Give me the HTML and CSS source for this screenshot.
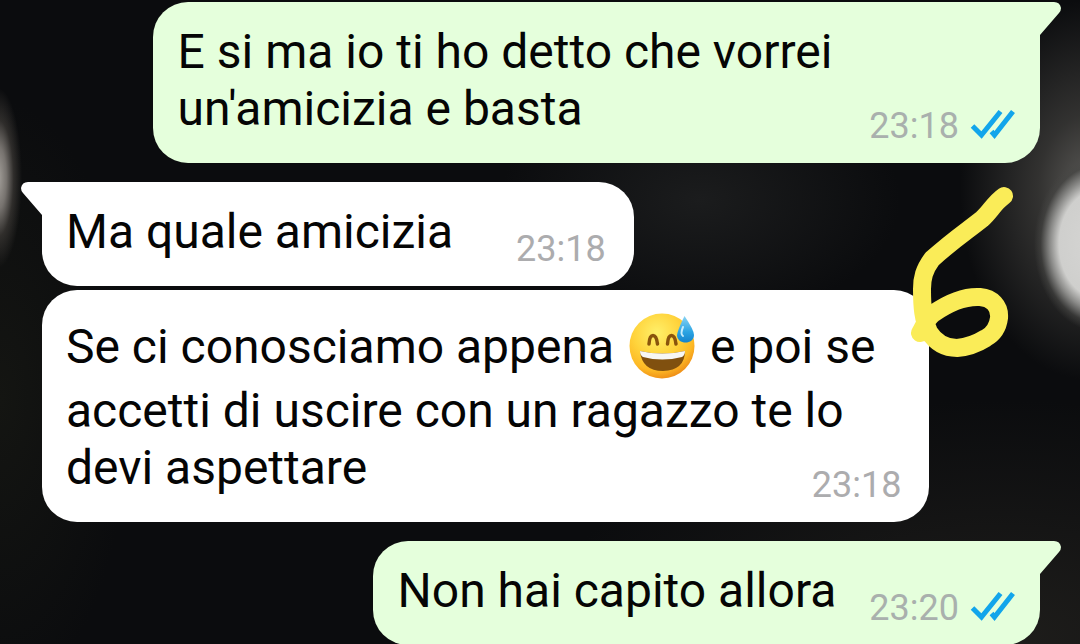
FILE: index.html
```html
<!DOCTYPE html>
<html lang="it">
<head>
    <meta charset="UTF-8">
    <meta name="viewport" content="width=device-width, initial-scale=1.0">
    <title>Chat</title>
    <link rel="stylesheet" href="styles.css">
</head>
<body>
    <main class="chat">
        <div class="bubble out">
            <svg class="tail" viewBox="0 0 21 34" aria-hidden="true"><path d="M0 0H14Q20 0 21 6Q21 9 19 11L0 33Z"/></svg>
            <p class="text">E si ma io ti ho detto che vorrei<br>un'amicizia e basta</p>
            <div class="meta">
                <time>23:18</time>
                <svg class="ticks" viewBox="0 0 46 34" role="img" aria-label="Letto"><path d="M3.500 17L12.500 26L31.500 2.500M22.500 22.500L25.500 26L44 2.500"/></svg>
            </div>
        </div>

        <div class="bubble in first">
            <svg class="tail" viewBox="0 0 21 34" aria-hidden="true"><path d="M21 0H7Q1 0 0 6Q0 9 2 11L21 33Z"/></svg>
            <p class="text">Ma quale amicizia</p>
            <div class="meta"><time>23:18</time></div>
        </div>

        <div class="bubble in long">
            <p class="text">Se ci conosciamo appena <svg class="emoji" viewBox="0 0 66 71" role="img" aria-label="Faccina sorridente con goccia di sudore">
                <defs>
                    <radialGradient id="face" cx="0.42" cy="0.3" r="0.72">
                        <stop offset="0" stop-color="#fff06a"/>
                        <stop offset="0.5" stop-color="#ffd33b"/>
                        <stop offset="0.8" stop-color="#fdb925"/>
                        <stop offset="1" stop-color="#ee8c16"/>
                    </radialGradient>
                    <linearGradient id="drop" x1="0" y1="0" x2="0" y2="1">
                        <stop offset="0" stop-color="#8ad4f3"/>
                        <stop offset="0.6" stop-color="#2ba4e3"/>
                        <stop offset="1" stop-color="#1583cc"/>
                    </linearGradient>
                </defs>
                <circle cx="33" cy="35" r="32.500" fill="url(#face)"/>
                <path d="M20 33Q20.500 24.500 24 24.500T28.500 33M38.500 33Q39 24.500 42.500 24.500T47 33" fill="none" stroke="#8a540c" stroke-width="3.500" stroke-linecap="round"/>
                <path d="M11 40Q33 45 56 40Q56 59 34 60Q13 60 11 40Z" fill="#80500f"/>
                <path d="M11 40Q33 45 56 40Q56 44 53 46Q33 51 14 46Q11 44 11 40Z" fill="#f7f7f4"/>
                <path d="M55.500 5Q65 19 65 24C65 34 48 34 48 24Q49 18 55.500 5Z" fill="url(#drop)"/>
                <path d="M54 16Q51 23 54 25" fill="none" stroke="#c6ecfb" stroke-width="2" stroke-linecap="round"/>
            </svg> e poi se<br>accetti di uscire con un ragazzo te lo<br>devi aspettare</p>
            <div class="meta"><time>23:18</time></div>
        </div>

        <div class="bubble out single">
            <svg class="tail" viewBox="0 0 21 34" aria-hidden="true"><path d="M0 0H14Q20 0 21 6Q21 9 19 11L0 33Z"/></svg>
            <p class="text">Non hai capito allora</p>
            <div class="meta">
                <time>23:20</time>
                <svg class="ticks" viewBox="0 0 46 34" role="img" aria-label="Letto"><path d="M3.500 17L12.500 26L31.500 2.500M22.500 22.500L25.500 26L44 2.500"/></svg>
            </div>
        </div>

        <!-- handwritten 6 -->
        <svg class="scribble" viewBox="0 0 110 180" role="img" aria-label="6">
            <path d="M94 16C84 23 81 31 72 39C57 51 43 60 22 79C14 90 12 98 12 109C12 127 13 139 19 152C26 163 35 168 47 168C59 167 68 163 76 158C85 153 88 146 89 138C90 126 82 118 70 117C53 116 37 124 24 133C15 140 14 147 10 153"/>
        </svg>
    </main>
</body>
</html>
```

FILE: styles.css
```css
* {
    box-sizing: border-box;
}

body {
    margin: 0;
    font-family: Roboto, Arial, sans-serif;
    background-color: #0b0c0e;
}

.chat {
    position: relative;
    display: flex;
    flex-direction: column;
    min-height: 100vh;
    max-height: 100vh;
    padding: 2px 40px 0 42px;
    overflow: hidden;
    /* blurred lights of the wallpaper */
    background:
        radial-gradient(ellipse 24px 90px at -2px 178px, #a5a19c 0%, #77736f 35%, rgba(70, 66, 62, 0.6) 65%, transparent 100%),
        radial-gradient(ellipse 66px 88px at 1100px 244px, #d6d6d4 0%, #cfcfcd 62%, #8a8a88 76%, rgba(70, 70, 68, 0.6) 90%, transparent 100%),
        radial-gradient(ellipse 130px 190px at 1090px 190px, #5c5b58 0%, rgba(60, 59, 57, 0.8) 40%, transparent 100%),
        radial-gradient(ellipse 200px 120px at 700px 200px, #1b1c1d 0%, transparent 100%),
        radial-gradient(ellipse 460px 240px at 1000px 640px, #1e1d1b 0%, transparent 100%),
        radial-gradient(ellipse 130px 300px at 0 400px, #141512 0%, transparent 100%);
}

.bubble {
    position: relative;
    display: flex;
    flex-shrink: 0;
    align-items: flex-end;
    width: max-content;
    padding: 21px 25px 26px;
    border-radius: 35px;
}

.out {
    align-self: flex-end;
    gap: 37px;
    background-color: #e5ffdc;
    border-top-right-radius: 0;
}

.single {
    gap: 33px;
}

.in {
    gap: 63px;
    margin-bottom: 19px;
    padding-right: 28px;
    padding-left: 24px;
    background-color: #fff;
}

.first {
    margin-top: 19px;
    margin-bottom: 4px;
    border-top-left-radius: 0;
}

/* the time shares the last line with the text */
.long {
    display: grid;
}

.long .text,
.long .meta {
    grid-area: 1 / 1;
}

.long .text {
    padding-right: 26px;
}

.long .meta {
    justify-self: end;
}

.text {
    margin: 0;
    font-size: 48px;
    line-height: 57px;
    color: #050505;
}

.meta {
    display: flex;
    align-items: center;
    gap: 10px;
    height: 42px;
    margin-bottom: -10px;
    font-size: 36px;
    line-height: 42px;
    color: #a9b0ad;
}

.in .meta {
    color: #acacae;
}

.tail {
    position: absolute;
    top: 0;
    width: 21px;
    height: 34px;
}

.out .tail {
    left: 100%;
    fill: #e5ffdc;
}

.in .tail {
    right: 100%;
    fill: #fff;
}

.ticks {
    width: 46px;
    height: 34px;
    fill: none;
    stroke: #12a5eb;
    stroke-width: 5;
}

.emoji {
    width: 66px;
    height: 71px;
    margin: 0 3px;
    vertical-align: -19px;
}

.scribble {
    position: absolute;
    top: 180px;
    right: 60px;
    width: 110px;
    height: 180px;
    fill: none;
    stroke: #faec58;
    stroke-width: 18;
    stroke-linecap: round;
    stroke-linejoin: round;
}
```
